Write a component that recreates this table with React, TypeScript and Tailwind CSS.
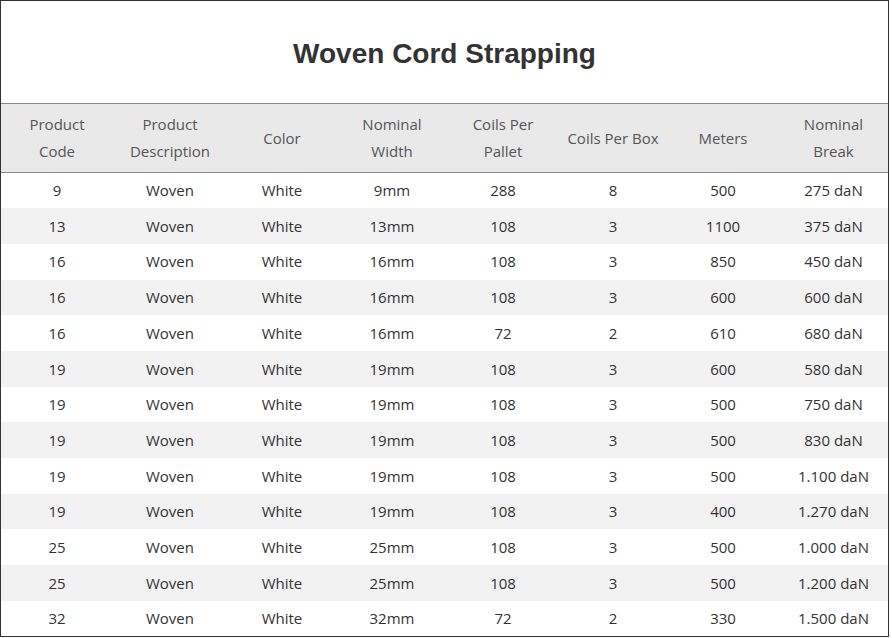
const HEAD = [
  ["Product", "Code"],
  ["Product", "Description"],
  ["Color"],
  ["Nominal", "Width"],
  ["Coils Per", "Pallet"],
  ["Coils Per Box"],
  ["Meters"],
  ["Nominal", "Break"],
];

const ROWS: [string, string, string, string, string, string, string, string][] = [
  ["9", "Woven", "White", "9mm", "288", "8", "500", "275 daN"],
  ["13", "Woven", "White", "13mm", "108", "3", "1100", "375 daN"],
  ["16", "Woven", "White", "16mm", "108", "3", "850", "450 daN"],
  ["16", "Woven", "White", "16mm", "108", "3", "600", "600 daN"],
  ["16", "Woven", "White", "16mm", "72", "2", "610", "680 daN"],
  ["19", "Woven", "White", "19mm", "108", "3", "600", "580 daN"],
  ["19", "Woven", "White", "19mm", "108", "3", "500", "750 daN"],
  ["19", "Woven", "White", "19mm", "108", "3", "500", "830 daN"],
  ["19", "Woven", "White", "19mm", "108", "3", "500", "1.100 daN"],
  ["19", "Woven", "White", "19mm", "108", "3", "400", "1.270 daN"],
  ["25", "Woven", "White", "25mm", "108", "3", "500", "1.000 daN"],
  ["25", "Woven", "White", "25mm", "108", "3", "500", "1.200 daN"],
  ["32", "Woven", "White", "32mm", "72", "2", "330", "1.500 daN"],
];

export default function App() {
  return (
    <div className="h-[638px] w-[892px] bg-white">
      <div className="h-[637px] w-[889px] overflow-hidden border border-[#333]">
        <div className="flex h-[102px] items-center justify-center pt-[3px]">
          <h1 className="font-['Liberation_Sans',Arial,sans-serif] text-[28px] font-bold text-[#333]">
            Woven Cord Strapping
          </h1>
        </div>
        <table className="w-full table-fixed border-collapse font-['Open_Sans','Noto_Sans',sans-serif] text-[15px]">
          <colgroup>
            <col className="w-[112px]" />
            <col className="w-[114px]" />
            <col className="w-[110px]" />
            <col className="w-[110px]" />
            <col className="w-[112px]" />
            <col className="w-[108px]" />
            <col className="w-[112px]" />
            <col className="w-[109px]" />
          </colgroup>
          <thead>
            <tr className="h-[69px] border-y border-[#8a8a8a] bg-[#e9e9e9] text-[#555]">
              {HEAD.map((h, i) => (
                <th key={i} className="px-1 text-center font-normal leading-[27px]">
                  {h.map((l) => (
                    <div key={l}>{l}</div>
                  ))}
                </th>
              ))}
            </tr>
          </thead>
          <tbody>
            {ROWS.map((r, i) => (
              <tr
                key={i}
                className={i % 2 === 1 ? "h-[35.7px] bg-[#f2f2f2] text-[#333]" : "h-[35.7px] bg-white text-[#333]"}
              >
                {r.map((c, j) => (
                  <td key={j} className="text-center">
                    {c}
                  </td>
                ))}
              </tr>
            ))}
          </tbody>
        </table>
      </div>
    </div>
  );
}
